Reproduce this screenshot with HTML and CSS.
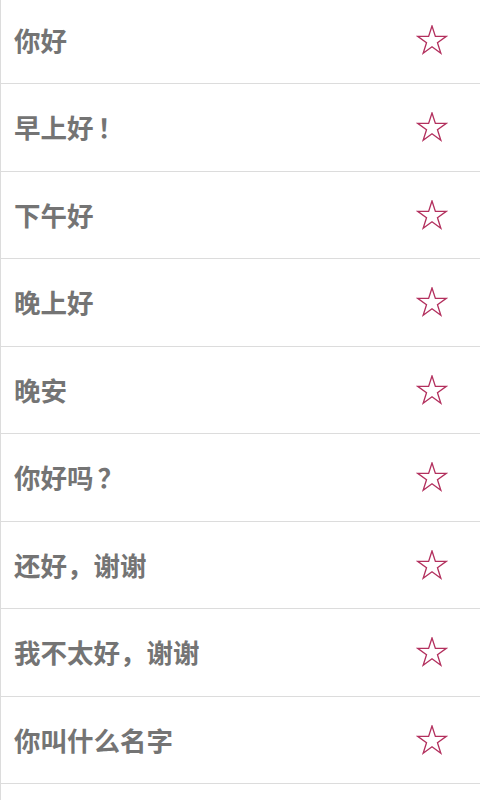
FILE: index.html
```html
<!DOCTYPE html>
<html lang="zh">
<head>
<meta charset="utf-8">
<link rel="stylesheet" href="styles.css">
</head>
<body>
<svg width="0" height="0" class="defs">
  <defs>
    <symbol id="star" viewBox="0 0 34 34">
      <polygon points="17,1 20.59,12.06 32.22,12.06 22.81,18.89 26.40,29.94 17,23.11 7.60,29.94 11.19,18.89 1.78,12.06 13.41,12.06" fill="none" stroke="currentColor" stroke-width="1.4" stroke-linejoin="miter"/>
    </symbol>
  </defs>
</svg>
<ul class="list">
  <li class="row"><span class="phrase">你好</span><svg class="star"><use href="#star"/></svg></li>
  <li class="row"><span class="phrase">早上好<span class="fw">！</span></span><svg class="star"><use href="#star"/></svg></li>
  <li class="row"><span class="phrase">下午好</span><svg class="star"><use href="#star"/></svg></li>
  <li class="row"><span class="phrase">晚上好</span><svg class="star"><use href="#star"/></svg></li>
  <li class="row"><span class="phrase">晚安</span><svg class="star"><use href="#star"/></svg></li>
  <li class="row"><span class="phrase">你好吗<span class="fw">？</span></span><svg class="star"><use href="#star"/></svg></li>
  <li class="row"><span class="phrase">还好，谢谢</span><svg class="star"><use href="#star"/></svg></li>
  <li class="row"><span class="phrase">我不太好，谢谢</span><svg class="star"><use href="#star"/></svg></li>
  <li class="row"><span class="phrase">你叫什么名字</span><svg class="star"><use href="#star"/></svg></li>
  <li class="row row-empty"></li>
</ul>
</body>
</html>
```

FILE: styles.css
```css
html, body {
  margin: 0;
  padding: 0;
  background: #ffffff;
  overflow: hidden;
  height: 800px;
}
.defs {
  position: absolute;
  width: 0;
  height: 0;
}
.list {
  list-style: none;
  margin: -3.5px 0 0 0;
  padding: 0;
  border-left: 1px solid #dcdcdc;
}
.row {
  display: flex;
  align-items: center;
  justify-content: space-between;
  height: 86.5px;
  border-bottom: 1px solid #dcdcdc;
  padding: 0 32px 0 13px;
}
.phrase {
  font-family: "Noto Sans CJK SC", "Noto Sans", sans-serif;
  font-weight: 700;
  font-size: 26.5px;
  color: #747474;
  line-height: 1;
}
.fw {
  margin-left: 4px;
}
.star {
  width: 32px;
  height: 32px;
  color: #b3305e;
  margin-top: 2px;
}
```
